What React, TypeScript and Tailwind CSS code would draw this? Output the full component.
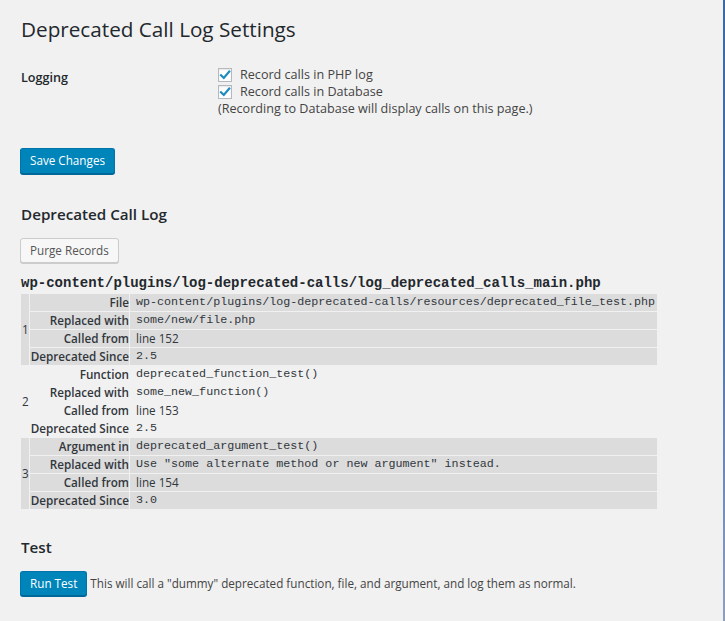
import React from "react";

type Row = { label: string; value: string; mono: boolean };
type Group = { id: number; shaded: boolean; rows: Row[] };

const groups: Group[] = [
  {
    id: 1,
    shaded: true,
    rows: [
      { label: "File", value: "wp-content/plugins/log-deprecated-calls/resources/deprecated_file_test.php", mono: true },
      { label: "Replaced with", value: "some/new/file.php", mono: true },
      { label: "Called from", value: "line 152", mono: false },
      { label: "Deprecated Since", value: "2.5", mono: true },
    ],
  },
  {
    id: 2,
    shaded: false,
    rows: [
      { label: "Function", value: "deprecated_function_test()", mono: true },
      { label: "Replaced with", value: "some_new_function()", mono: true },
      { label: "Called from", value: "line 153", mono: false },
      { label: "Deprecated Since", value: "2.5", mono: true },
    ],
  },
  {
    id: 3,
    shaded: true,
    rows: [
      { label: "Argument in", value: "deprecated_argument_test()", mono: true },
      { label: "Replaced with", value: 'Use "some alternate method or new argument" instead.', mono: true },
      { label: "Called from", value: "line 154", mono: false },
      { label: "Deprecated Since", value: "3.0", mono: true },
    ],
  },
];

function Checkbox() {
  return (
    <span className="flex h-[14px] w-[14px] items-center justify-center border border-[#b4b9be] bg-white shadow-[inset_0_1px_2px_rgba(0,0,0,0.1)]">
      <svg width="12" height="12" viewBox="0 0 12 12">
        <path d="M2 6.2 L4.8 9 L10.2 2.6" fill="none" stroke="#1e8cbe" strokeWidth="2.2" strokeLinecap="square" />
      </svg>
    </span>
  );
}

export default function App() {
  return (
    <div className="flex min-h-[621px] bg-[#f1f1f1] font-['Open_Sans',sans-serif] text-[#444]">
      <div className="flex-1 pl-[21px] pt-[16px]">
        <h1 className="text-[20.7px] leading-[27px] font-normal text-[#23282d]">Deprecated Call Log Settings</h1>

        <div className="mt-[23px] flex">
          <div className="w-[197px] pt-[3px] text-[12.6px] leading-[17px] font-semibold text-[#23282d]">Logging</div>
          <div className="text-[12.6px] leading-[17px]">
            <div className="flex h-[17px] items-center gap-[8px]">
              <Checkbox />
              <span>Record calls in PHP log</span>
            </div>
            <div className="flex h-[17px] items-center gap-[8px]">
              <Checkbox />
              <span>Record calls in Database</span>
            </div>
            <div>(Recording to Database will display calls on this page.)</div>
          </div>
        </div>

        <div className="mt-[30px] -ml-px">
          <button className="h-[26px] rounded-[3px] border border-[#0073aa] border-b-[#006799] bg-[#0085ba] px-[9px] text-[11.7px] leading-none text-white shadow-[0_1px_0_#006799]">
            Save Changes
          </button>
        </div>

        <h2 className="mt-[30px] text-[15.2px] leading-[20px] font-semibold text-[#23282d]">Deprecated Call Log</h2>

        <div className="mt-[13px] -ml-px">
          <button className="h-[25px] rounded-[3px] border border-[#cccccc] bg-[#f7f7f7] px-[9px] text-[11.7px] leading-none text-[#555] shadow-[0_1px_0_#cccccc]">
            Purge Records
          </button>
        </div>

        <div className="mt-[12px] font-['Liberation_Mono',monospace] text-[14px] leading-[17px] font-bold text-[#23282d]">
          wp-content/plugins/log-deprecated-calls/log_deprecated_calls_main.php
        </div>

        <table className="mt-px -ml-px w-[638px] border-separate border-spacing-[1px] text-[11.7px] text-[#32373c]">
          <tbody>
            {groups.map((g) =>
              g.rows.map((r, i) => (
                <tr key={`${g.id}-${i}`} className={g.shaded ? "bg-[#dcdcdc]" : ""}>
                  {i === 0 && (
                    <td rowSpan={4} className={`w-[8px] pl-px align-middle leading-[17px] ${g.shaded ? "bg-[#dcdcdc]" : ""}`}>
                      {g.id}
                    </td>
                  )}
                  <td className="h-[17px] w-[99px] p-0 text-right leading-[17px] font-semibold whitespace-nowrap">{r.label}</td>
                  <td
                    className={`h-[17px] py-0 pl-[6px] leading-[17px] whitespace-nowrap ${
                      r.mono ? "font-['Liberation_Mono',monospace]" : ""
                    }`}
                  >
                    {r.value}
                  </td>
                </tr>
              ))
            )}
          </tbody>
        </table>

        <h2 className="mt-[27px] text-[15.2px] leading-[20px] font-semibold text-[#23282d]">Test</h2>

        <div className="mt-[14px] -ml-px flex items-center gap-[3px] text-[11.7px]">
          <button className="h-[25px] rounded-[3px] border border-[#0073aa] border-b-[#006799] bg-[#0085ba] px-[9px] text-[11.7px] leading-none text-white shadow-[0_1px_0_#006799]">
            Run Test
          </button>
          <span>This will call a "dummy" deprecated function, file, and argument, and log them as normal.</span>
        </div>
      </div>
      <div className="w-[2px] bg-gradient-to-b from-[#3c68a6] via-[#4a72ab] to-[#8da0be]" />
    </div>
  );
}
